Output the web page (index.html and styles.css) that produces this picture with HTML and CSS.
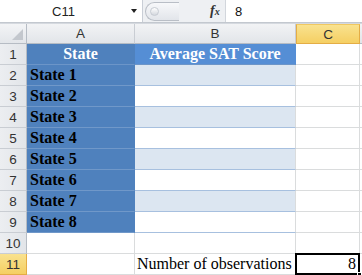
FILE: index.html
```html
<!DOCTYPE html>
<html>
<head>
<meta charset="utf-8">
<link rel="stylesheet" href="styles.css">
</head>
<body>
<div class="app">
  <div class="fbar">
    <div class="namebox"><span class="nb-text">C11</span><span class="nb-arrow"></span></div>
    <div class="mid">
      <div class="pill"><span class="knob"></span></div>
      <span class="fx"><i>f</i><span class="x">x</span></span>
    </div>
    <div class="input">8</div>
  </div>
  <div class="sep"></div>
  <div class="sheet">
    <div class="corner"><span class="tri"></span></div>
    <div class="ch">A</div>
    <div class="ch">B</div>
    <div class="ch sel">C</div>
    <div class="ch edge"></div>

    <div class="rh">1</div><div class="c hdrA">State</div><div class="c hdrB">Average SAT Score</div><div class="c"></div><div class="c edge"></div>
    <div class="rh">2</div><div class="c st">State 1</div><div class="c bb band"></div><div class="c"></div><div class="c edge"></div>
    <div class="rh">3</div><div class="c st">State 2</div><div class="c bb"></div><div class="c"></div><div class="c edge"></div>
    <div class="rh">4</div><div class="c st">State 3</div><div class="c bb band"></div><div class="c"></div><div class="c edge"></div>
    <div class="rh">5</div><div class="c st">State 4</div><div class="c bb"></div><div class="c"></div><div class="c edge"></div>
    <div class="rh">6</div><div class="c st">State 5</div><div class="c bb band"></div><div class="c"></div><div class="c edge"></div>
    <div class="rh">7</div><div class="c st">State 6</div><div class="c bb"></div><div class="c"></div><div class="c edge"></div>
    <div class="rh">8</div><div class="c st">State 7</div><div class="c bb band"></div><div class="c"></div><div class="c edge"></div>
    <div class="rh">9</div><div class="c st">State 8</div><div class="c bb"></div><div class="c"></div><div class="c edge"></div>
    <div class="rh">10</div><div class="c"></div><div class="c"></div><div class="c"></div><div class="c edge"></div>
    <div class="rh sel">11</div><div class="c"></div><div class="c txt">Number of observations</div><div class="c active">8<span class="handle"></span></div><div class="c edge"></div>
  </div>
</div>
</body>
</html>
```

FILE: styles.css
```css
* { box-sizing: border-box; }
html, body { margin: 0; padding: 0; background: #fff; }
.app { width: 362px; height: 275px; overflow: hidden; font-family: "Liberation Serif", "Times New Roman", serif; }

.fbar { display: flex; height: 22px; background: #fff; }
.namebox { width: 143px; display: flex; align-items: center; position: relative; border-right: 1px solid #c9ced6; }
.nb-text { flex: 1; text-align: center; font-family: "Liberation Sans", Arial, sans-serif; font-size: 13px; color: #222; padding-right: 4px; }
.nb-arrow { width: 0; height: 0; border-left: 3px solid transparent; border-right: 3px solid transparent; border-top: 4px solid #222; margin-right: 5px; }
.mid { width: 83px; background: #eef0f3; display: flex; align-items: center; border-right: 1px solid #d2d6dc; }
.pill { width: 34px; height: 19px; margin-left: 2px; border: 1px solid #b9bec6; border-right: none; border-radius: 10px 0 0 10px; background: linear-gradient(#f7f8fa, #e2e5ea); display: flex; align-items: center; padding-left: 4px; }
.knob { width: 9px; height: 9px; border-radius: 50%; background: linear-gradient(#fff, #d4d8de); border: 1px solid #c6cbd2; }
.fx { margin-left: 31px; font-family: "Liberation Serif", serif; font-size: 14px; color: #333; font-weight: bold; }
.fx i { font-style: italic; }
.fx .x { font-size: 10px; font-style: italic; }
.input { flex: 1; display: flex; align-items: center; padding-left: 9px; font-family: "Liberation Sans", Arial, sans-serif; font-size: 13px; color: #111; }

.sep { height: 2px; background: #d5d9df; border-top: 1px solid #c3c8cf; }

.sheet { display: grid; grid-template-columns: 27px 108px 161px 64px 2px; grid-template-rows: 20px repeat(11, 21px); }
.corner { background: linear-gradient(#f3f4f6, #e3e6ea); border-right: 1px solid #b6bcc4; border-bottom: 1px solid #b6bcc4; position: relative; }
.tri { position: absolute; right: 3px; bottom: 3px; width: 0; height: 0; border-left: 11px solid transparent; border-bottom: 11px solid #c3c7cd; }
.ch { background: linear-gradient(#f2f3f5, #e2e5e9); border-right: 1px solid #c9cdd3; border-bottom: 1px solid #b6bcc4; font-family: "Liberation Sans", Arial, sans-serif; font-size: 13.5px; color: #333; display: flex; align-items: center; justify-content: center; }
.ch.sel { background: linear-gradient(#f9e28f, #f5cf63); border: 1px solid #e4ad45; border-top-color: #f0c860; }
.ch.edge { border-right: none; }
.rh { background: linear-gradient(90deg, #eceef1, #e2e5e9); border-right: 1px solid #b6bcc4; border-bottom: 1px solid #c9cdd3; font-family: "Liberation Sans", Arial, sans-serif; font-size: 13.5px; color: #333; display: flex; align-items: center; justify-content: center; }
.rh.sel { background: linear-gradient(#f9e28f, #f5cf63); border-color: #e4ad45; }

.c { border-right: 1px solid #dadcdd; border-bottom: 1px solid #dadcdd; font-size: 16px; display: flex; align-items: center; white-space: nowrap; }
.c.edge { border-right: none; }
.hdrA { background: #4f81bd; color: #fff; font-weight: bold; justify-content: center; border-right-color: #4f81bd; border-bottom-color: #6c95c8; }
.hdrB { background: #558ed5; color: #fff; font-weight: bold; justify-content: center; border-right-color: #558ed5; border-bottom-color: #6c95c8; }
.st { background: #4f81bd; color: #000; font-weight: bold; padding-left: 3px; border-right-color: #4f81bd; border-bottom-color: #7098c9; }
.bb { border-bottom-color: #a7c0df; }
.band { background: #dce6f1; }
.txt { padding-left: 2px; color: #000; }
.active { position: relative; border: 2px solid #000; justify-content: flex-end; padding-right: 2px; color: #000; margin: -1px 0 0 -1px; }
.handle { position: absolute; right: -4px; bottom: -4px; width: 5px; height: 5px; background: #000; border: 1px solid #fff; }
```
